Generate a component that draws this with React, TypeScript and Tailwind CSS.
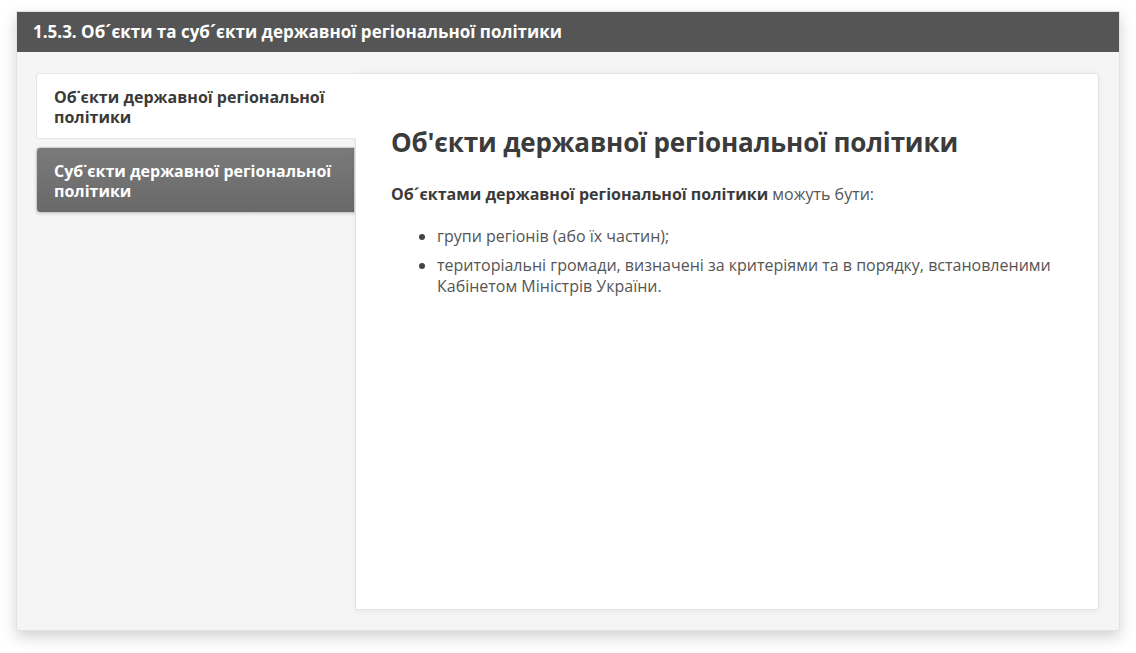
import React from 'react'

const tabs = [
  { title: 'Об\u02D9єкти державної регіональної політики', active: true },
  { title: 'Суб\u02D9єкти державної регіональної політики', active: false },
]

export default function App() {
  return (
    <div className="w-[1136px] h-[653px] bg-white pt-[11px] pl-[16px]" style={{ fontFamily: '"Open Sans", "Noto Sans", sans-serif' }}>
      <div className="w-[1104px] h-[620px] bg-[#f5f5f5] border border-[#e2e2e2] shadow-[0_6px_14px_rgba(0,0,0,0.18)] flex flex-col">
        <div className="h-[40px] bg-[#555555] flex items-center px-[16px] shrink-0">
          <h1 className="text-white text-[17px] font-bold">1.5.3. Об´єкти та суб´єкти державної регіональної політики</h1>
        </div>
        <div className="flex flex-1 pt-[21px] pl-[19px] pr-[20px] pb-[20px]">
          <div className="w-[319px] flex flex-col gap-[8px] shrink-0">
            {tabs.map((t) =>
              t.active ? (
                <div key={t.title} className="relative z-10 h-[66px] bg-white rounded-l-[4px] border border-r-0 border-[#e6e6e6] pl-[17px] pt-[13px] pr-[20px] text-[16px] leading-[20px] font-bold text-[#3a3a3a] -mr-[1px]">
                  {t.title}
                </div>
              ) : (
                <div key={t.title} className="h-[66px] rounded-l-[4px] bg-gradient-to-b from-[#7a7a7a] to-[#696969] border border-[#cfcfcf] pl-[17px] pt-[13px] pr-[20px] text-[16px] leading-[20px] font-bold text-white shadow-[0_1px_3px_rgba(0,0,0,0.15)]">
                  {t.title}
                </div>
              )
            )}
          </div>
          <div className="flex-1 bg-white border border-[#e3e3e3] rounded-r-[4px] shadow-[0_1px_6px_rgba(0,0,0,0.06)] pl-[35px] pr-[30px] pt-[50px]">
            <h2 className="text-[26px] leading-[36px] font-bold text-[#3b3b3b] tracking-[-0.15px]">Об'єкти державної регіональної політики</h2>
            <p className="mt-[24px] text-[16px] leading-[21px] text-[#555555]">
              <span className="font-bold text-[#3a3a3a]">Об´єктами державної регіональної політики</span> можуть бути:
            </p>
            <ul className="mt-[21px] pl-[46px] list-disc text-[16px] leading-[21px] text-[#555555] flex flex-col gap-[8px] marker:text-[#444]">
              <li>групи регіонів (або їх частин);</li>
              <li>територіальні громади, визначені за критеріями та в порядку, встановленими Кабінетом Міністрів України.</li>
            </ul>
          </div>
        </div>
      </div>
    </div>
  )
}
